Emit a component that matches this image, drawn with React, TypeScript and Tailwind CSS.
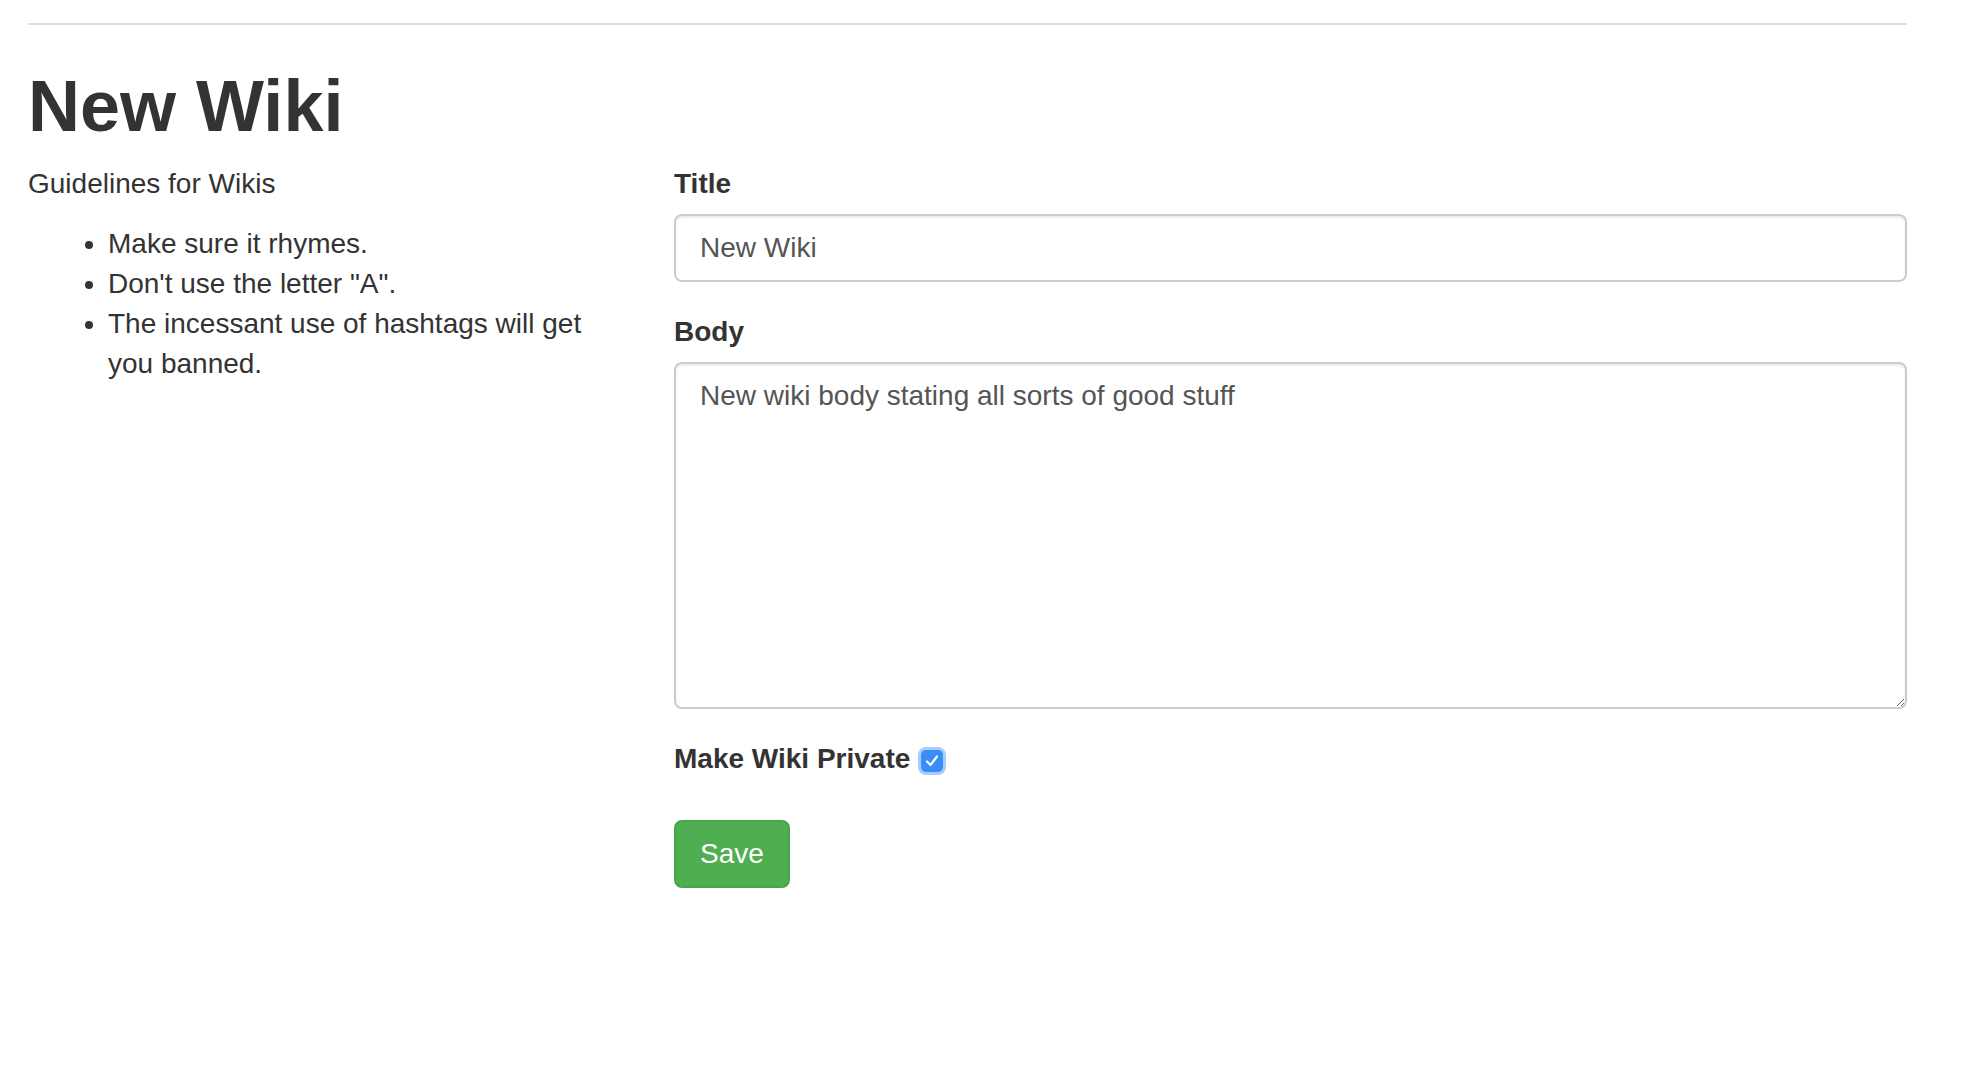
import React from "react";

export default function App() {
  return (
    <div className="min-h-screen bg-white text-[#333] font-['Liberation_Sans',Arial,sans-serif]">
      <div className="ml-[28px] w-[1879px]">
        <div className="pt-[23px]">
          <div className="h-0 border-t-2 border-[#dedede]" />
        </div>
        <h1 className="mt-[41px] text-[72px] leading-[80px] font-bold text-[#333]">New Wiki</h1>
        <div className="mt-[18px] flex">
          <div className="w-[586px] shrink-0">
            <p className="text-[28px] leading-[40px]">Guidelines for Wikis</p>
            <ul className="mt-[20px] list-disc pl-[80px] text-[28px] leading-[40px]">
              <li>Make sure it rhymes.</li>
              <li>Don't use the letter "A".</li>
              <li>The incessant use of hashtags will get you banned.</li>
            </ul>
          </div>
          <div className="ml-[60px] flex-1">
            <div className="pb-[30px]">
              <label className="block mb-[10px] text-[28px] leading-[40px] font-bold">Title</label>
              <input
                type="text"
                defaultValue="New Wiki"
                className="block w-full h-[68px] px-[24px] py-[12px] text-[28px] leading-[40px] text-[#555] bg-white border-2 border-[#ccc] rounded-[8px] shadow-[inset_0_2px_2px_rgba(0,0,0,0.075)] outline-none"
              />
            </div>
            <div className="pb-[30px]">
              <label className="block mb-[10px] text-[28px] leading-[40px] font-bold">Body</label>
              <textarea
                defaultValue="New wiki body stating all sorts of good stuff"
                className="block w-full h-[347px] px-[24px] pt-[12px] pb-[12px] text-[28px] leading-[40px] text-[#555] bg-white border-2 border-[#ccc] rounded-[8px] shadow-[inset_0_2px_2px_rgba(0,0,0,0.075)] outline-none resize-y"
              />
            </div>
            <div className="pb-[30px]">
              <div className="pb-[11px] flex items-center text-[28px] leading-[40px] font-bold">
                <span>Make Wiki Private</span>
                <span className="ml-[8px] mt-[4px] flex h-[28px] w-[28px] items-center justify-center rounded-[8px] bg-[#a8cdfb]">
                  <span className="flex h-[22px] w-[22px] items-center justify-center rounded-[5px] bg-[#3a8cf6]">
                    <svg width="16" height="16" viewBox="0 0 16 16" fill="none">
                      <path d="M3 8.5 L6.5 12 L13 3.5" stroke="white" strokeWidth="2.2" strokeLinecap="round" strokeLinejoin="round" />
                    </svg>
                  </span>
                </span>
              </div>
            </div>
            <button className="h-[68px] px-[24px] text-[28px] leading-[40px] text-white bg-[#4eae50] border-2 border-[#48a64a] rounded-[8px]">
              Save
            </button>
          </div>
        </div>
      </div>
    </div>
  );
}
